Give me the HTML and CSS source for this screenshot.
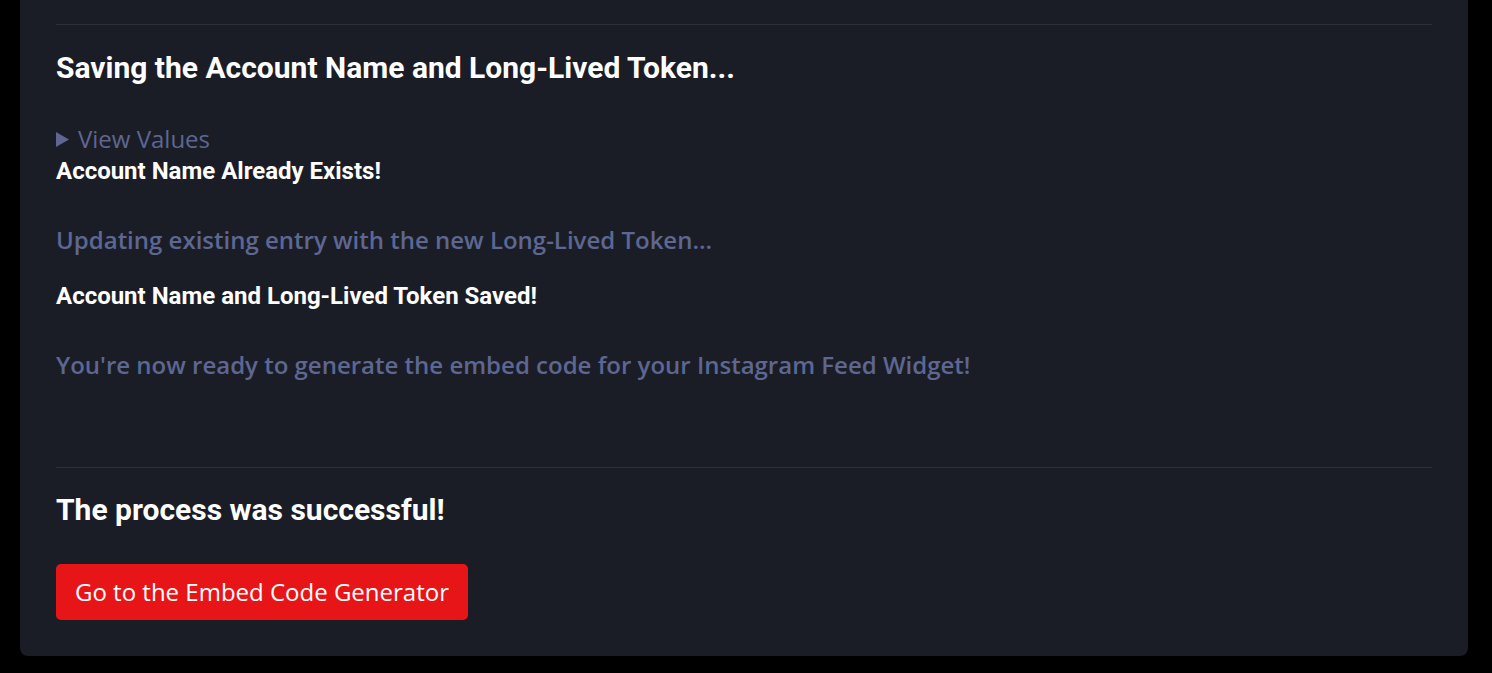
FILE: index.html
```html
<!DOCTYPE html>
<html>
<head>
<meta charset="utf-8">
<link rel="stylesheet" href="styles.css">
</head>
<body>
<main class="card">
  <hr class="rule">
  <h2 class="step-title">Saving the Account Name and Long-Lived Token...</h2>
  <details class="values">
    <summary><svg class="caret" width="13" height="15" viewBox="0 0 13 15"><path d="M0 0 L13 7.5 L0 15 Z" fill="#5d6791"/></svg><span>View Values</span></summary>
  </details>
  <h4 class="status">Account Name Already Exists!</h4>
  <p class="muted muted-first">Updating existing entry with the new Long-Lived Token...</p>
  <h4 class="status">Account Name and Long-Lived Token Saved!</h4>
  <p class="muted muted-last">You're now ready to generate the embed code for your Instagram Feed Widget!</p>
  <hr class="rule rule-final">
  <h2 class="result">The process was successful!</h2>
  <a class="btn" href="#">Go to the Embed Code Generator</a>
</main>
</body>
</html>
```

FILE: styles.css
```css
html, body {
  margin: 0;
  padding: 0;
  background: #000;
}
body {
  padding: 0 24px 17px 20px;
  height: 673px;
  box-sizing: border-box;
  overflow: hidden;
}
.card {
  background: #1b1d26;
  border-radius: 0 0 8px 8px;
  padding: 24px 36px 36px 36px;
  display: flex;
  flex-direction: column;
  align-items: flex-start;
}
.rule {
  width: 100%;
  border: 0;
  border-top: 1px solid #2c2f3c;
  margin: 0;
}
.step-title {
  font-family: Roboto, "Liberation Sans", sans-serif;
  font-weight: 700;
  font-size: 30px;
  line-height: 36px;
  color: #fff;
  margin: 25px 0 0 0;
}
.values {
  margin-top: 37px;
  font-family: "Open Sans", sans-serif;
  font-size: 24px;
  line-height: 32px;
  color: #5d6791;
}
.values summary {
  cursor: pointer;
  list-style: none;
  display: flex;
  align-items: center;
  gap: 9px;
}
.values summary::-webkit-details-marker {
  display: none;
}
.caret {
  display: block;
  flex: none;
  margin-top: 1px;
}
.status {
  font-family: Roboto, "Liberation Sans", sans-serif;
  font-weight: 700;
  font-size: 24px;
  line-height: 32px;
  color: #fff;
  margin: 0;
}
.muted {
  font-family: "Open Sans", sans-serif;
  font-weight: 600;
  font-size: 24px;
  line-height: 32px;
  color: #5d6791;
  margin: 38px 0 24px 0;
}
.muted-first {
  margin-top: 37px;
}
.muted-last {
  margin: 37px 0 25px 0;
}
.rule-final {
  margin-top: 61px;
}
.result {
  font-family: Roboto, "Liberation Sans", sans-serif;
  font-weight: 700;
  font-size: 30px;
  line-height: 36px;
  color: #fff;
  margin: 24px 0 0 0;
}
.btn {
  margin-top: 36px;
  background: #e81518;
  color: #fff;
  text-decoration: none;
  font-family: "Open Sans", sans-serif;
  font-size: 24px;
  line-height: 56px;
  height: 56px;
  padding: 0 19px;
  border-radius: 5px;
}
```
